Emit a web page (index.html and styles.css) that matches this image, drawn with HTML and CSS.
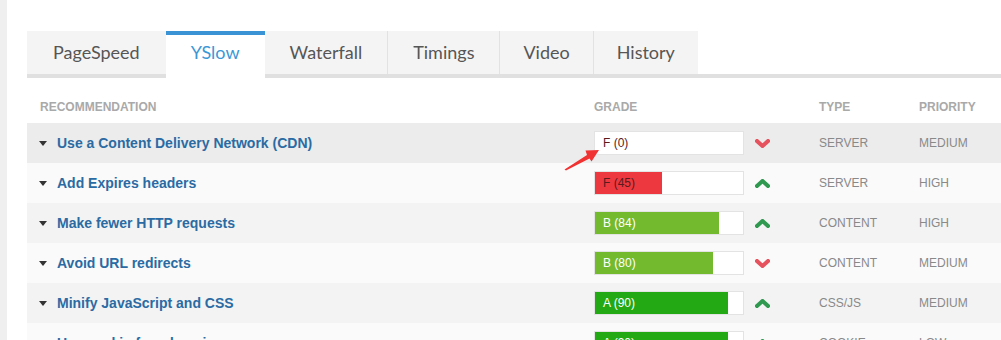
FILE: index.html
```html
<!DOCTYPE html>
<html>
<head>
<meta charset="utf-8">
<link rel="stylesheet" href="styles.css">
</head>
<body>
<div class="page">
  <nav class="tabs">
    <div class="tab">PageSpeed</div>
    <div class="tab active">YSlow</div>
    <div class="tab">Waterfall</div>
    <div class="tab sep">Timings</div>
    <div class="tab sep">Video</div>
    <div class="tab sep">History</div>
  </nav>

  <div class="table">
    <div class="thead">
      <div class="th th-rec">Recommendation</div>
      <div class="th">Grade</div>
      <div class="th"></div>
      <div class="th">Type</div>
      <div class="th">Priority</div>
    </div>

    <div class="row hover">
      <div class="rec"><span class="caret"></span><a class="rec-link">Use a Content Delivery Network (CDN)</a></div>
      <div class="grade"><div class="fill fill-f" style="width:0%"><span class="label label-f">F (0)</span></div></div>
      <div class="trend"><svg class="chev down" viewBox="0 0 15 9" width="15" height="9"><polyline points="2,2 7.5,7 13,2"/></svg></div>
      <div class="meta">SERVER</div>
      <div class="meta">MEDIUM</div>
    </div>

    <div class="row">
      <div class="rec"><span class="caret"></span><a class="rec-link">Add Expires headers</a></div>
      <div class="grade"><div class="fill fill-f" style="width:45%"><span class="label label-f">F (45)</span></div></div>
      <div class="trend"><svg class="chev up" viewBox="0 0 15 9" width="15" height="9"><polyline points="2,7 7.5,2 13,7"/></svg></div>
      <div class="meta">SERVER</div>
      <div class="meta">HIGH</div>
    </div>

    <div class="row alt">
      <div class="rec"><span class="caret"></span><a class="rec-link">Make fewer HTTP requests</a></div>
      <div class="grade"><div class="fill fill-b" style="width:84%"><span class="label">B (84)</span></div></div>
      <div class="trend"><svg class="chev up" viewBox="0 0 15 9" width="15" height="9"><polyline points="2,7 7.5,2 13,7"/></svg></div>
      <div class="meta">CONTENT</div>
      <div class="meta">HIGH</div>
    </div>

    <div class="row">
      <div class="rec"><span class="caret"></span><a class="rec-link">Avoid URL redirects</a></div>
      <div class="grade"><div class="fill fill-b" style="width:80%"><span class="label">B (80)</span></div></div>
      <div class="trend"><svg class="chev down" viewBox="0 0 15 9" width="15" height="9"><polyline points="2,2 7.5,7 13,2"/></svg></div>
      <div class="meta">CONTENT</div>
      <div class="meta">MEDIUM</div>
    </div>

    <div class="row alt">
      <div class="rec"><span class="caret"></span><a class="rec-link">Minify JavaScript and CSS</a></div>
      <div class="grade"><div class="fill fill-a" style="width:90%"><span class="label">A (90)</span></div></div>
      <div class="trend"><svg class="chev up" viewBox="0 0 15 9" width="15" height="9"><polyline points="2,7 7.5,2 13,7"/></svg></div>
      <div class="meta">CSS/JS</div>
      <div class="meta">MEDIUM</div>
    </div>

    <div class="row">
      <div class="rec"><span class="caret"></span><a class="rec-link">Use cookie-free domains</a></div>
      <div class="grade"><div class="fill fill-a" style="width:90%"><span class="label">A (90)</span></div></div>
      <div class="trend"><svg class="chev up" viewBox="0 0 15 9" width="15" height="9"><polyline points="2,7 7.5,2 13,7"/></svg></div>
      <div class="meta">COOKIE</div>
      <div class="meta">LOW</div>
    </div>
  </div>
</div>

<svg class="annot" width="50" height="30" viewBox="560 145 50 30">
  <polygon points="564.5,169.5 587,155 585.5,150.5 599,150 591.5,161.5 589.5,158.5 566,170.5"/>
</svg>
</body>
</html>
```

FILE: styles.css
```css
html, body {
  margin: 0;
  height: 340px;
  overflow: hidden;
}

body {
  background: #efefef;
  font-family: "Liberation Sans", Arial, sans-serif;
  position: relative;
}

.page {
  margin-left: 7px;
  background: #fff;
  min-height: 400px;
  padding: 31px 0 0 20px;
}

/* Tabs */
.tabs {
  display: flex;
  align-items: flex-start;
  border-bottom: 4px solid #e0e0e0;
}

.tab {
  font-family: Lato, "Open Sans", sans-serif;
  font-size: 18px;
  color: #565656;
  background: #f4f4f4;
  line-height: 43px;
  height: 43px;
  padding: 0 25px;
  white-space: nowrap;
}

.tab:first-child {
  padding: 0 26px;
}

.tab.sep {
  border-left: 1px solid #e2e2e2;
}

.tab.sep:nth-child(n+5) {
  padding: 0 23px;
}

.tab.active {
  background: #fff;
  color: #3c97d6;
  border-top: 4px solid #3a93d5;
  line-height: 35px;
  height: 35px;
  padding-bottom: 8px;
  margin-bottom: -4px;
}

/* Table */
.thead,
.row {
  display: grid;
  grid-template-columns: 567px 150px 75px 100px 1fr;
  align-items: center;
}

.thead {
  height: 45px;
  align-items: end;
}

.th {
  font-size: 12px;
  font-weight: bold;
  line-height: 14px;
  color: #a9a9a9;
  text-transform: uppercase;
  padding-bottom: 9px;
}

.th-rec {
  padding-left: 13px;
}

.row {
  height: 40px;
  background: #fafafa;
}

.row.alt {
  background: #f3f3f3;
}

.row.hover {
  background: #ececec;
}

.rec {
  display: flex;
  align-items: center;
  padding-left: 12px;
}

.caret {
  width: 0;
  height: 0;
  border-left: 4px solid transparent;
  border-right: 4px solid transparent;
  border-top: 5px solid #333;
  margin-right: 10px;
}

.rec-link {
  font-size: 14px;
  font-weight: bold;
  color: #2a6ba3;
  text-decoration: none;
}

.grade {
  box-sizing: border-box;
  width: 150px;
  height: 24px;
  border: 1px solid #e3e3e3;
  background: #fff;
}

.fill {
  height: 22px;
  white-space: nowrap;
}

.fill-f { background: #ee383f; }
.fill-b { background: #73ba2f; }
.fill-a { background: #22a914; }

.label {
  display: inline-block;
  padding-left: 8px;
  font-size: 12px;
  line-height: 22px;
  color: #fff;
}

.label-f {
  color: #5c1a1c;
}

.trend {
  padding-left: 11px;
  display: flex;
}

.chev {
  fill: none;
  stroke-width: 4;
  stroke-linecap: square;
  stroke-linejoin: miter;
}

.chev.up { stroke: #2f9a4f; }
.chev.down { stroke: #e6525d; }

.meta {
  font-size: 12px;
  color: #898989;
}

/* Annotation arrow drawn over the screenshot */
.annot {
  position: absolute;
  left: 560px;
  top: 145px;
}

.annot polygon {
  fill: #f03232;
}
```
